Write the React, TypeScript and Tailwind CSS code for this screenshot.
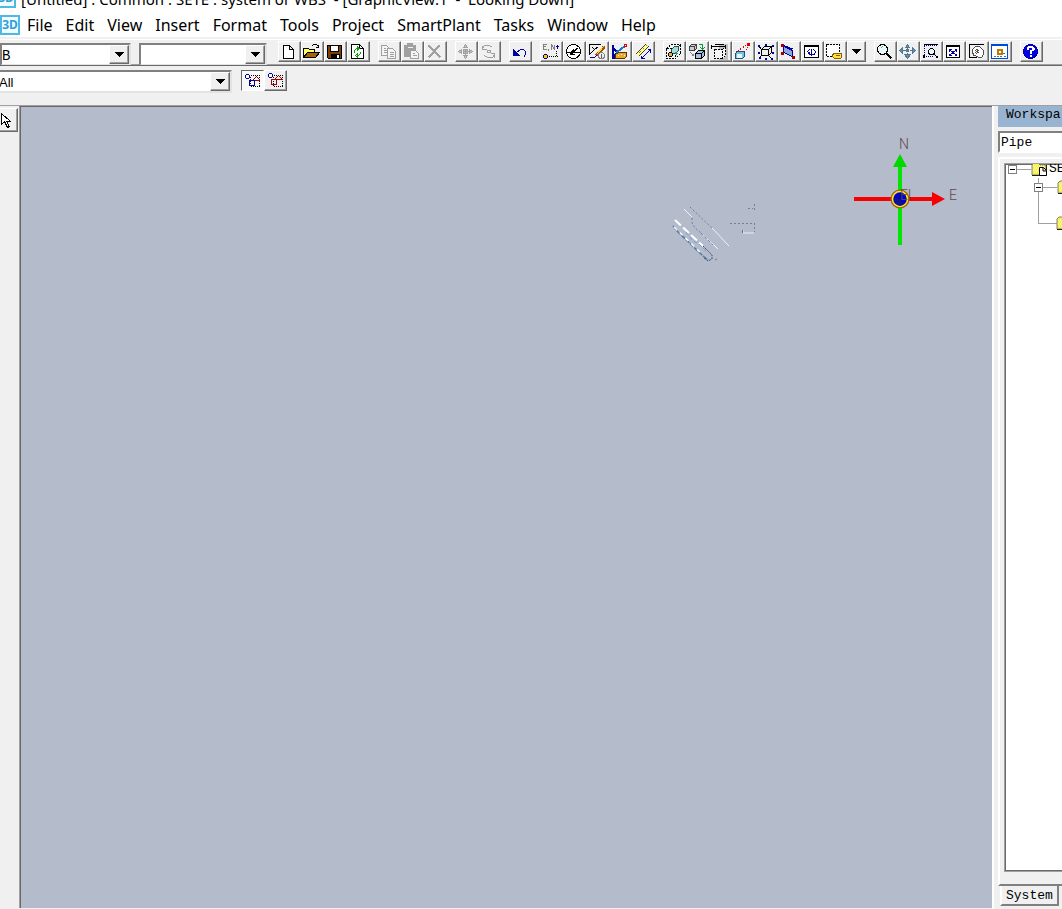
import type { ReactNode } from 'react'
import clsx from 'clsx'

const menus = [
  'File',
  'Edit',
  'View',
  'Insert',
  'Format',
  'Tools',
  'Project',
  'SmartPlant',
  'Tasks',
  'Window',
  'Help',
]

interface Tool {
  label: string
  art: ReactNode
  disabled?: boolean
}

const toolGroups: Tool[][] = [
  [
    { label: 'New', art: <path d="M3 2h6l4 4v9H3zM9 2v4h4" fill="#fff" stroke="#000" /> },
    {
      label: 'Open',
      art: (
        <>
          <path d="M0 14V5h5l1 1h5v3" fill="#ffff66" stroke="#000" />
          <path d="M0 14l4-5h12l-4 5z" fill="#a86400" stroke="#000" />
          <path d="M8 3l2-2h3l2 2M12 4h3V1" fill="none" stroke="#000" />
        </>
      ),
    },
    {
      label: 'Save',
      art: (
        <>
          <path d="M1 2h14v13H2l-1-1z" fill="#804000" stroke="#000" />
          <path d="M4 2h8v6H4z" fill="#fff" stroke="#000" />
          <path d="M4 10h9v5H4z" fill="#000" />
          <path d="M10 11h2v3h-2z" fill="#fff" />
        </>
      ),
    },
    {
      label: 'Refresh',
      art: (
        <>
          <path d="M2 1h8l4 4v10H2zM10 1v4h4" fill="#fff" stroke="#000" />
          <path d="M5 9V7l2-2h2M8 3v4l2-2zM11 8v2l-2 2H7M8 10v4l-2-2z" fill="none" stroke="#00a000" />
        </>
      ),
    },
  ],
  [
    {
      label: 'Copy',
      disabled: true,
      art: (
        <>
          <path d="M1 2h5l3 3v7H1zM3 5h2M3 7h4M3 9h4" fill="#f4f4f4" stroke="#a0a0a0" />
          <path d="M7 5h5l3 3v7H7zM9 9h4M9 11h4M9 13h4" fill="#f4f4f4" stroke="#a0a0a0" />
        </>
      ),
    },
    {
      label: 'Paste',
      disabled: true,
      art: (
        <>
          <path d="M1 2h3V0h5v2h3v11H1z" fill="#a0a0a0" stroke="#a0a0a0" />
          <path d="M4 4h5" stroke="#f0f0f0" />
          <path d="M7 7h5l3 3v5H7zM9 10h2M9 12h4" fill="#f4f4f4" stroke="#a0a0a0" />
        </>
      ),
    },
    { label: 'Delete', disabled: true, art: <path d="M2 2l12 12M13 2L2 14" stroke="#a0a0a0" strokeWidth="2" /> },
  ],
  [
    {
      label: 'Move',
      disabled: true,
      art: (
        <path
          d="M8 1l2 3H6zM8 15l2-3H6zM1 8l3-2v4zM15 8l-3-2v4zM8 5v6M5 8h6M6 6h4v4H6z"
          fill="#c0c0c0"
          stroke="#a0a0a0"
        />
      ),
    },
    {
      label: 'Rotate',
      disabled: true,
      art: (
        <path
          d="M2 2v4h4M2 5l2-3h5l3 2M14 14v-4h-4M14 11l-2 3H7l-3-2M7 7h3v2H7z"
          fill="none"
          stroke="#a0a0a0"
        />
      ),
    },
  ],
  [
    {
      label: 'Undo',
      art: (
        <>
          <path d="M5 9l4-3h3l2 2v3l-2 3" fill="none" stroke="#0000a0" />
          <path d="M2 6v6h6z" fill="#0000a0" stroke="#0000a0" />
        </>
      ),
    },
  ],
  [
    {
      label: 'PinPoint',
      art: (
        <>
          <path d="M4 1H1v5h3M1 3h2M6 5v2M9 6V1l3 5V1" fill="none" stroke="#808080" />
          <path d="M15 1v4M13 3h4" stroke="#0000a0" />
          <path d="M14 7v6M6 13h9" stroke="#000" strokeDasharray="1 1" />
          <circle cx="3" cy="13" r="2" fill="#ffc800" stroke="#0000a0" />
        </>
      ),
    },
    {
      label: 'Point Along',
      art: (
        <>
          <circle cx="8" cy="8" r="7" fill="#fff" stroke="#000" />
          <path d="M1 9h14M8 8l5-4" stroke="#000" />
          <path d="M5 9l3-3 2 3zM5 9v2h4" fill="#000" stroke="#000" />
        </>
      ),
    },
    {
      label: 'Sketch 3D Path',
      art: (
        <>
          <path d="M1 11V1h11M4 4l2 2 4-3M1 11l5-5" fill="none" stroke="#000" />
          <path d="M16 3l-8 9" stroke="#a05000" strokeWidth="3" />
          <path d="M15 3l-7 8" stroke="#ffd030" />
          <path d="M1 14h5l2-2" fill="none" stroke="#0000a0" />
          <circle cx="13" cy="12" r="3" fill="#eee" stroke="#808080" />
          <path d="M13 10v4" stroke="#606060" />
        </>
      ),
    },
    {
      label: 'Measure',
      art: (
        <>
          <path d="M1 1v13l4-4M1 4l4 4M1 14h3" fill="none" stroke="#0000a0" strokeWidth="2" />
          <path d="M5 9l8-6" stroke="#1878c8" strokeWidth="2" />
          <path d="M13 1h2v2h-2z" fill="#fff" stroke="#e00000" />
          <path d="M4 11l3-2h8v4l-2 2H4z" fill="#e8a828" stroke="#603000" />
          <path d="M6 12h1M9 11h1M12 12h1" stroke="#fff" />
        </>
      ),
    },
    {
      label: 'Ruler',
      art: (
        <>
          <path d="M1 11L11 1l3 2L4 13z" fill="#ffff90" />
          <path d="M1 11L11 1M4 13L14 3" stroke="#404040" />
          <path d="M3 11L12 2" stroke="#a08000" strokeDasharray="1 1" />
          <path d="M7 15L16 6M7 12v3h3M13 6h3v3" fill="none" stroke="#0000a0" />
        </>
      ),
    },
  ],
  [
    {
      label: 'Show Volume',
      art: (
        <>
          <path d="M1 5h9v10H1zM1 5l5-4h9l-5 4M15 1v9l-5 5" fill="#f4f4f4" stroke="#000" strokeDasharray="2 1" />
          <path d="M6 6l3-3h4v4l-3 3H6z" fill="#a8d8d8" stroke="#205050" />
          <circle cx="5" cy="11" r="2" fill="#e0b040" stroke="#000" />
          <path d="M10 9l2 2" stroke="#20a040" strokeWidth="2" />
        </>
      ),
    },
    {
      label: 'Swap Views',
      art: (
        <>
          <path d="M1 3l2-2h5v4L6 7H1zM1 3h5v4M6 3l2-2" fill="#c8d0d0" stroke="#404040" />
          <path d="M10 1h4v5M12 4l2 2 2-2" fill="none" stroke="#00a040" />
          <path d="M7 10l3-3h6v5l-3 3H7zM7 10h6v5M13 10l3-3" fill="#a8c0e0" stroke="#000" />
          <path d="M2 9l3 3M3 12h2v-2" fill="none" stroke="#808080" />
        </>
      ),
    },
    {
      label: 'Clip Volume',
      art: (
        <>
          <path d="M7 0h10v16H7z" fill="#c0c0c0" />
          <path d="M0 1v4M0 3h14M14 1v4M3 1h9" stroke="#000" />
          <path d="M3 6h8v9H3zM11 6l3-2v8l-3 3" fill="#f4f4f4" stroke="#000" strokeDasharray="2 1" />
        </>
      ),
    },
    {
      label: 'Named View',
      art: (
        <>
          <path d="M2 8l11-7M11 8l3-5" stroke="#e00000" strokeDasharray="1 1" />
          <path d="M13 0h2v2h-2z" fill="#e00000" stroke="#e00000" />
          <path d="M1 10l2-2h7v5l-2 2H1z" fill="#70c0e8" stroke="#205080" />
          <path d="M2 10h5v4H2z" fill="#e8f8ff" />
        </>
      ),
    },
    {
      label: 'Perspective',
      art: (
        <>
          <path d="M4 6h7v6H4zM4 6l3-3h7l-3 3M14 3v6l-3 3M1 2l3 4M2 14l2-2M11 12l3 3" fill="none" stroke="#000" />
          <path d="M0 1h2v2H0zM7 0h2v2H7zM14 1h2v2h-2zM0 8h2v2H0zM1 13h2v2H1zM7 14h2v2H7zM13 14h2v2h-2zM14 8h2v2h-2z" fill="#0000a0" />
        </>
      ),
    },
    {
      label: 'Look At Surface',
      art: (
        <>
          <path d="M3 3l9 4v6L3 9z" fill="#90a8d8" stroke="#0000a0" />
          <path d="M2 2l10 4" stroke="#0000a0" strokeWidth="2" />
          <path d="M1 1h2v2H1zM1 9h2v2H1zM12 13h2v2h-2z" fill="#a00000" stroke="#a00000" />
        </>
      ),
    },
    {
      label: 'Rotate View',
      art: (
        <>
          <path d="M1 2h14v12H1zM1 3h14" fill="#fff" stroke="#000" />
          <path d="M8 5v7M6 6L4 8l2 3h5l1-3-2-2M6 8v3" fill="none" stroke="#0000a0" />
        </>
      ),
    },
    {
      label: 'Select by Filter',
      art: (
        <>
          <path d="M0 1h13v12H0z" fill="#fff" stroke="#000" strokeDasharray="2 1" />
          <path d="M6 11l2-1h7v4l-1 1H8l-2-2z" fill="#ffe040" stroke="#806000" />
          <path d="M9 12h4" stroke="#806000" />
        </>
      ),
    },
  ],
  [
    {
      label: 'Zoom',
      art: (
        <>
          <circle cx="6" cy="6" r="5" fill="#e8f8f8" stroke="#000" />
          <path d="M10 10l5 5" stroke="#000" strokeWidth="2" />
          <path d="M4 5l2-2" stroke="#60a0a0" />
        </>
      ),
    },
    {
      label: 'Pan',
      art: (
        <path
          d="M8 1l2 3H6zM8 15l3-4H5zM0 7l3-3v6zM16 7l-3-3v6zM8 4v2M8 9v2M3 7h3M10 7h3M7 6h2v2H7z"
          fill="#6090a8"
          stroke="#507890"
        />
      ),
    },
    {
      label: 'Zoom Area',
      art: (
        <>
          <path d="M1 2h14M2 2v11h8" fill="none" stroke="#0000a0" strokeDasharray="1 1" />
          <path d="M1 1h14" stroke="#000" />
          <circle cx="9" cy="8" r="3" fill="#e8f8f8" stroke="#000" />
          <path d="M11 10l4 4M13 14h2v-2M1 12h1v2H1z" fill="none" stroke="#000" />
        </>
      ),
    },
    {
      label: 'Fit',
      art: (
        <>
          <path d="M1 2h13v12H1zM1 3h13" fill="#fff" stroke="#000" />
          <path d="M4 6l7 6M11 6l-7 6M4 8V6h2M9 6h2v2M4 10v2h2M9 12h2v-2" fill="none" stroke="#0000a0" />
        </>
      ),
    },
    {
      label: 'Pan View',
      art: (
        <>
          <path d="M15 1H1v13h7" fill="none" stroke="#000" />
          <path d="M4 6l3-3h4l4 4v4l-2 3h-3l-3-2H5v-2H4V8z" fill="#fff" stroke="#505050" />
          <path d="M7 7l3-2M7 9l4-3M8 10l3-2" stroke="#505050" />
        </>
      ),
    },
    {
      label: 'Common View',
      art: (
        <>
          <path d="M0 1h16v14H0z" fill="#fff" stroke="#0048d8" />
          <path d="M0 1h16M0 2h16" stroke="#0048d8" />
          <path d="M6 6h4v4H6z" fill="#fff" stroke="#c07800" strokeWidth="2" />
          <path d="M11 10h3M12 13h2M2 13h8" stroke="#2080d0" strokeDasharray="2 1" />
        </>
      ),
    },
  ],
  [
    {
      label: 'Help',
      art: (
        <>
          <circle cx="8" cy="8" r="7" fill="#0000e0" stroke="#0000a0" />
          <path d="M5 6V5l2-2h2l2 2v1L8 8v2" fill="none" stroke="#fff" strokeWidth="2" />
          <path d="M7 11h2v2H7z" fill="#fff" />
        </>
      ),
    },
  ],
]

function Art({ children }: { children: ReactNode }) {
  return (
    <svg viewBox="-0.5 -0.5 17 17" className="size-[17px] shrink-0" shapeRendering="crispEdges" aria-hidden="true">
      {children}
    </svg>
  )
}

function Arrow() {
  return (
    <svg viewBox="0 0 9 5" className="h-[5px] w-[9px]" shapeRendering="crispEdges" aria-hidden="true">
      <path d="M0 0h9L4.500 5z" />
    </svg>
  )
}

const raised =
  'border border-t-white border-l-white border-r-[#696969] border-b-[#696969] bg-[#f0f0f0] shadow-[inset_-1px_-1px_0_#a0a0a0]'

function ToolButton({ label, art, disabled, pressed }: Tool & { pressed?: boolean }) {
  return (
    <button
      type="button"
      aria-label={label}
      disabled={disabled}
      className={clsx(
        'flex h-[21px] w-[23px] shrink-0 items-center justify-center pr-[2px]',
        pressed
          ? 'border border-t-[#696969] border-l-[#696969] border-r-white border-b-white bg-[#f8f8f8]'
          : raised,
      )}
    >
      <Art>{art}</Art>
    </button>
  )
}

function Combo({ label, value, className }: { label: string; value: string; className?: string }) {
  return (
    <div
      className={clsx(
        'relative flex h-[23px] shrink-0 border-2 border-t-[#808080] border-l-[#808080] border-r-[#e3e3e3] border-b-[#e3e3e3] bg-white',
        className,
      )}
    >
      <select aria-label={label} defaultValue={value} className="w-full appearance-none bg-white pt-px outline-none">
        <option>{value}</option>
      </select>
      <span className={clsx('pointer-events-none absolute inset-y-0 right-0 flex w-5 items-center justify-center', raised)}>
        <Arrow />
      </span>
    </div>
  )
}

function Logo() {
  return (
    <span className="flex size-5 shrink-0 items-center justify-center border-2 border-[#4fb9e6] bg-[#f2fbff] text-[12px] leading-none font-bold text-[#2f9fd8]">
      3D
    </span>
  )
}

function Compass() {
  return (
    <svg viewBox="840 130 130 125" className="absolute top-[22px] right-[22px] h-[125px] w-[130px]">
      <path d="M898 165h4v81h-4z" fill="#00e600" />
      <path d="M900 155l7 13h-14z" fill="#00d800" />
      <path d="M854 198h79v4h-79z" fill="#f80000" />
      <path d="M945 200l-13 7v-14z" fill="#f80000" />
      <circle cx="900" cy="200" r="8" fill="#0000c8" stroke="#a06010" strokeWidth="3" />
      <circle cx="900" cy="200" r="7.500" fill="#0000c8" stroke="#ffe820" strokeWidth="1.500" />
      <path d="M894 199l6 1 4 5-4 2-5-3z" fill="#101090" />
      <g fill="#5c4a4a" fontFamily="Roboto, sans-serif" fontWeight="300" fontSize="14">
        <text x="899" y="150">N</text>
        <text x="949" y="201">E</text>
        <text x="900" y="201">El</text>
      </g>
    </svg>
  )
}

function PipingModel() {
  return (
    <svg viewBox="660 195 110 75" className="absolute top-[87px] right-[222px] h-[75px] w-[110px]" fill="none">
      <g stroke="#6c8098" strokeDasharray="2 2">
        <path d="M690 208l22 21M692 219v5l3 5 6 5M730 224.500h22M754.500 224v9M748 209.500h5M754.500 205v8" />
      </g>
      <path d="M684 210l8 8M712 229l17 18M701 234l17 16" stroke="#edf4fc" />
      <path d="M701 234l12 12" stroke="#6688b4" strokeDasharray="3 2" />
      <path d="M675 221l28 26" stroke="#fff" strokeWidth="2" strokeDasharray="8 3" />
      <path d="M673 227l4 5M677 232l26 25 5 4" stroke="#56799f" strokeWidth="1.500" strokeDasharray="5 1" />
      <path d="M674 228l28 27" stroke="#f4faff" strokeDasharray="4 4" strokeWidth="1.500" />
      <path d="M686 233l6 8 8 5 6 6" stroke="#7a9cc8" strokeDasharray="4 2" />
      <path d="M703 247l9 9v4l-4 2-4-3" stroke="#415468" strokeDasharray="2 1" />
      <path d="M715 261l2-1" stroke="#777" />
      <path d="M743 231v3h11" stroke="#e4f0f8" />
      <path d="M742.500 231v3" stroke="#4c708c" />
    </svg>
  )
}

function Folder() {
  return (
    <svg viewBox="0 0 16 14" className="h-[14px] w-4 shrink-0" aria-hidden="true">
      <path d="M1 13V3l2-2h4l2 2h6v10z" fill="#f8f040" stroke="#808080" />
      <path d="M2 4h12M3 6h12M2 8h12M3 10h12" stroke="#fff" strokeDasharray="1 1" />
      <path d="M1 13.500h14.500V3" fill="none" stroke="#202020" />
    </svg>
  )
}

function Expander() {
  return (
    <button type="button" aria-label="Collapse" className="flex size-[9px] shrink-0 items-center justify-center border border-[#808080] bg-white">
      <span className="h-px w-[5px] bg-black" />
    </button>
  )
}

function WorkspacePanel() {
  return (
    <aside className="flex w-[70px] shrink-0 flex-col overflow-hidden border-l-2 border-white bg-[#f0f0f0] pl-1 font-['Liberation_Mono','Noto_Sans_CJK_SC',monospace] text-[13px]">
      <h2 className="h-[21px] shrink-0 bg-[#99b4d1] pl-2 leading-[18px]">Workspa</h2>
      <div className="mt-1 flex h-[22px] shrink-0 border-2 border-r-0 border-t-[#808080] border-l-[#808080] border-b-white bg-white">
        <select aria-label="Filter" className="w-full appearance-none bg-white pl-px outline-none">
          <option>Pipe</option>
        </select>
      </div>
      <div className="mt-1 flex min-h-0 grow flex-col border-t-2 border-b-2 border-l-2 border-white border-b-[#808080] pt-1 pb-3 pl-1">
        <div className="grow overflow-hidden border border-r-0 border-[#a0a0a0] bg-white shadow-[inset_1px_1px_0_#696969,inset_0_-1px_0_#696969]">
          <div className="-mt-1 flex h-[18px] items-center pl-[3px]">
            <Expander />
            <span className="w-[14px] shrink-0 border-t border-[#a0a0a0]" />
            <span className="relative">
              <Folder />
              <svg viewBox="0 0 8 9" className="absolute right-0 bottom-0 h-[9px] w-2" aria-hidden="true">
                <path d="M.5.500h4l3 3v5h-7zM4 1v3h3" fill="#fff" stroke="#000" />
              </svg>
            </span>
            <span className="pl-[2px]">SETE</span>
          </div>
          <div className="ml-[33px] h-[46px] border-b border-l border-[#a0a0a0]">
            <div className="-ml-[5px] flex h-[18px] items-center">
              <Expander />
              <span className="w-[14px] shrink-0 border-t border-[#a0a0a0]" />
              <Folder />
            </div>
          </div>
          <div className="-mt-2 pl-[51px]">
            <Folder />
          </div>
        </div>
      </div>
      <div className="mb-[3px] flex h-5 shrink-0 pl-[2px]">
        <button type="button" className="border-r-2 border-b-2 border-l-2 border-l-white border-r-[#808080] border-b-[#808080] px-1">
          System
        </button>
      </div>
    </aside>
  )
}

export default function App() {
  return (
    <div className="flex h-screen flex-col overflow-hidden bg-[#f0f0f0] font-['Noto_Sans','Noto_Sans_CJK_SC',sans-serif] text-black">
      <header className="shrink-0 bg-white leading-6">
        <div className="flex h-3 items-end overflow-hidden">
          <div className="mb-1 -ml-1">
            <Logo />
          </div>
          <h1 className="mb-px pl-[5px] text-[15px] whitespace-pre">
            {'[Untitled] : Common : SETE : system or WBS  - [GraphicView:1  -  Looking Down]'}
          </h1>
        </div>
        <nav className="flex h-[25px] items-center">
          <Logo />
          <div className="flex gap-[13px] pl-[7px] text-[16px]">
            {menus.map(name => (
              <button key={name} type="button">
                {name}
              </button>
            ))}
          </div>
        </nav>
      </header>

      <div className="flex h-[29px] shrink-0 items-start overflow-hidden border-b border-[#696969] pt-1 font-['Liberation_Mono',monospace] text-[14px] shadow-[inset_0_-1px_0_#a0a0a0,inset_0_2px_0_#f0f0f0,inset_0_3px_0_#fff]">
        <Combo label="Style" value="B" className="mt-[2px] w-[131px]" />
        <Combo label="Line" value="" className="mt-[2px] ml-2 w-[128px]" />
        <div className="ml-[11px] flex gap-2">
          {toolGroups.map((group, i) => (
            <div key={i} className="flex">
              {group.map(tool => (
                <ToolButton key={tool.label} {...tool} />
              ))}
              {i === 5 && (
                <button type="button" aria-label="More tools" className={clsx('flex w-[19px] items-center justify-center', raised)}>
                  <Arrow />
                </button>
              )}
            </div>
          ))}
        </div>
      </div>

      <div className="flex h-[39px] shrink-0 items-start pt-1 font-['Liberation_Sans',sans-serif] text-[13px]">
        <Combo label="Locate filter" value="All" className="-ml-[3px] w-[235px]" />
        <div className="ml-[9px] flex">
          <ToolButton
            label="Inside"
            pressed
            art={
              <>
                <path d="M7 3h9v11H7z" fill="none" stroke="#000" strokeDasharray="1 1" />
                <circle cx="4" cy="4" r="2" fill="#fff" stroke="#0000a0" />
                <path d="M9 8l4-4 4 4z" fill="none" stroke="#a00000" />
                <path d="M6 8h5v5H6z" fill="none" stroke="#0000a0" />
              </>
            }
          />
          <ToolButton
            label="Overlapping"
            art={
              <>
                <path d="M7 3h9v11H7z" fill="none" stroke="#000" strokeDasharray="1 1" />
                <circle cx="4" cy="3" r="2" fill="#fff" stroke="#0000a0" />
                <path d="M8 7l4-4 4 4zM5 7h5v5H5z" fill="none" stroke="#a00000" />
              </>
            }
          />
        </div>
      </div>

      <div className="flex min-h-0 grow border-t border-[#a0a0a0]">
        <div className="w-[19px] shrink-0 pt-[2px]">
          <button type="button" aria-label="Select" className={clsx('flex h-6 w-[18px] items-center border-l-0', raised)}>
            <svg viewBox="0 0 11 17" className="h-[17px] w-[11px]" shapeRendering="crispEdges" aria-hidden="true">
              <path d="M1.500 1.500v11l3-3 3 6 2-1-3-5h4z" fill="#fff" stroke="#000" />
            </svg>
          </button>
        </div>
        <main className="relative mb-px grow border-t border-l border-t-[#696969] border-l-[#a0a0a0] bg-[#b4bbcb] shadow-[inset_1px_0_0_#696969]">
          <PipingModel />
          <Compass />
        </main>
        <WorkspacePanel />
      </div>
    </div>
  )
}
